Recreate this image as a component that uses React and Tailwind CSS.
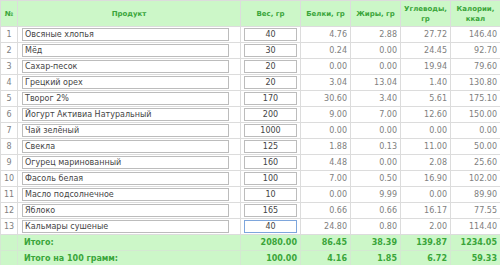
import React from "react";

const rows = [
  ["Овсяные хлопья", "40", "4.76", "2.88", "27.72", "146.40"],
  ["Мёд", "30", "0.24", "0.00", "24.45", "92.70"],
  ["Сахар-песок", "20", "0.00", "0.00", "19.94", "79.60"],
  ["Грецкий орех", "20", "3.04", "13.04", "1.40", "130.80"],
  ["Творог 2%", "170", "30.60", "3.40", "5.61", "175.10"],
  ["Йогурт Активиа Натуральный", "200", "9.00", "7.00", "12.60", "150.00"],
  ["Чай зелёный", "1000", "0.00", "0.00", "0.00", "0.00"],
  ["Свекла", "125", "1.88", "0.13", "11.00", "50.00"],
  ["Огурец маринованный", "160", "4.48", "0.00", "2.08", "25.60"],
  ["Фасоль белая", "100", "7.00", "0.50", "16.90", "102.00"],
  ["Масло подсолнечное", "10", "0.00", "9.99", "0.00", "89.90"],
  ["Яблоко", "165", "0.66", "0.66", "16.17", "77.55"],
  ["Кальмары сушеные", "40", "24.80", "0.80", "2.00", "114.40"],
];

const totals = [
  ["Итого:", "2080.00", "86.45", "38.39", "139.87", "1234.05"],
  ["Итого на 100 грамм:", "100.00", "4.16", "1.85", "6.72", "59.33"],
];

const th = "border border-[#dcdcdc] bg-[#ccf7c8] text-[#3aa53a] font-bold text-[7px] leading-[10px] text-center align-middle";
const td = "border border-[#dcdcdc] text-[8px] text-[#808080] h-[16px] p-0 align-middle";

export default function App() {
  return (
    <div className="w-[500px] h-[265px] bg-white overflow-hidden" style={{ fontFamily: "'DejaVu Sans', Verdana, sans-serif" }}>
      <table className="w-[500px] table-fixed border-collapse">
        <colgroup>
          <col className="w-[17px]" />
          <col className="w-[223px]" />
          <col className="w-[60px]" />
          <col className="w-[50px]" />
          <col className="w-[50px]" />
          <col className="w-[50px]" />
          <col className="w-[50px]" />
        </colgroup>
        <thead>
          <tr className="h-[26px]">
            <th className={th}>№</th>
            <th className={th}>Продукт</th>
            <th className={th}>Вес, гр</th>
            <th className={th}>Белки, гр</th>
            <th className={th}>Жиры, гр</th>
            <th className={th}>Углеводы,<br />гр</th>
            <th className={th}>Калории,<br />ккал</th>
          </tr>
        </thead>
        <tbody>
          {rows.map((r, i) => (
            <tr key={i}>
              <td className={`${td} text-center`}>{i + 1}</td>
              <td className={`${td} pl-[4px] pr-[11px]`}>
                <div className="h-[13px] border border-[#bcbcbc] bg-white px-[2px] text-[8px] leading-[11px] text-[#444] whitespace-nowrap overflow-hidden">
                  {r[0]}
                </div>
              </td>
              <td className={`${td} px-[3px]`}>
                <div
                  className={`h-[13px] border ${i === rows.length - 1 ? "border-[#7ea6dc]" : "border-[#bcbcbc]"} bg-white text-center text-[8px] leading-[11px] text-[#444]`}
                >
                  {r[1]}
                </div>
              </td>
              {r.slice(2).map((v, j) => (
                <td key={j} className={`${td} text-right pr-[3px]`}>{v}</td>
              ))}
            </tr>
          ))}
          {totals.map((r, i) => (
            <tr key={"t" + i} className={i === 0 ? "h-[16px]" : "h-[17px]"}>
              <td className="border border-[#d4e8d2] bg-[#ccf7c8]"></td>
              <td className="border border-[#d4e8d2] bg-[#ccf7c8] pl-[6px] text-[8px] font-bold text-[#3aa53a]">{r[0]}</td>
              {r.slice(1).map((v, j) => (
                <td key={j} className="border border-[#d4e8d2] bg-[#ccf7c8] text-right pr-[3px] text-[8px] font-bold text-[#3aa53a]">{v}</td>
              ))}
            </tr>
          ))}
        </tbody>
      </table>
    </div>
  );
}
